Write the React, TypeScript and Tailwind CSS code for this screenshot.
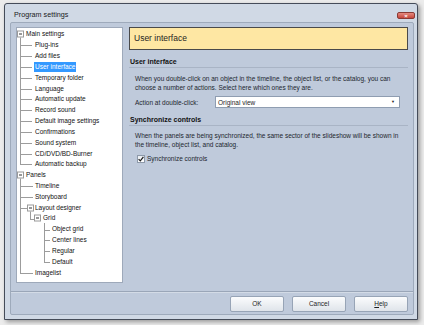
import React from 'react';

type Node = { label: string; level: number; expandable?: boolean; selected?: boolean };

const ROW_H = 10.84;

const TREE: Node[] = [
  { label: 'Main settings', level: 0, expandable: true },
  { label: 'Plug-ins', level: 1 },
  { label: 'Add files', level: 1 },
  { label: 'User interface', level: 1, selected: true },
  { label: 'Temporary folder', level: 1 },
  { label: 'Language', level: 1 },
  { label: 'Automatic update', level: 1 },
  { label: 'Record sound', level: 1 },
  { label: 'Default image settings', level: 1 },
  { label: 'Confirmations', level: 1 },
  { label: 'Sound system', level: 1 },
  { label: 'CD/DVD/BD-Burner', level: 1 },
  { label: 'Automatic backup', level: 1 },
  { label: 'Panels', level: 0, expandable: true },
  { label: 'Timeline', level: 1 },
  { label: 'Storyboard', level: 1 },
  { label: 'Layout designer', level: 1, expandable: true },
  { label: 'Grid', level: 2, expandable: true },
  { label: 'Object grid', level: 3 },
  { label: 'Center lines', level: 3 },
  { label: 'Regular', level: 3 },
  { label: 'Default', level: 3 },
  { label: 'Imagelist', level: 1 },
];

// text start (relative to tree inner edge) per level
const TEXT_X = [9, 18, 26, 35];
const BOX_X = [0, 10, 17];

const cy = (i: number) => i * ROW_H + ROW_H / 2;
const hy = (i: number) => Math.round(cy(i)) + 0.5;

function TreeLines() {
  const c = '#9c9c9c';
  return (
    <svg className="absolute left-0 top-0" width="105" height="254" shapeRendering="crispEdges">
      {/* main settings children */}
      <line x1="3.5" y1={cy(0) + 3} x2="3.5" y2={hy(12)} stroke={c} />
      {[1, 2, 3, 4, 5, 6, 7, 8, 9, 10, 11, 12].map((i) => (
        <line key={i} x1="3.5" y1={hy(i)} x2="15" y2={hy(i)} stroke={c} />
      ))}
      {/* panels children */}
      <line x1="3.5" y1={cy(13) + 3} x2="3.5" y2={hy(22)} stroke={c} />
      {[14, 15, 22].map((i) => (
        <line key={i} x1="3.5" y1={hy(i)} x2="16" y2={hy(i)} stroke={c} />
      ))}
      <line x1="3.5" y1={hy(16)} x2="10" y2={hy(16)} stroke={c} />
      {/* layout designer -> grid */}
      <line x1="13.5" y1={cy(16) + 3} x2="13.5" y2={hy(17)} stroke={c} />
      <line x1="13.5" y1={hy(17)} x2="17" y2={hy(17)} stroke={c} />
      {/* grid children */}
      <line x1="27.5" y1={cy(17) + 4} x2="27.5" y2={hy(21)} stroke={c} />
      {[18, 19, 20, 21].map((i) => (
        <line key={i} x1="27.5" y1={hy(i)} x2="33" y2={hy(i)} stroke={c} />
      ))}
    </svg>
  );
}

function ExpandBox() {
  return (
    <span className="flex h-[7px] w-[7px] items-center justify-center border border-[#9a9a9a] bg-white">
      <span className="h-px w-[3px] bg-[#333]" />
    </span>
  );
}

function Tree() {
  return (
    <div className="relative h-[256px] w-[107px] border border-[#9ea9ba] bg-white">
      <div className="relative mt-[1px]">
        <TreeLines />
        {TREE.map((n) => (
          <div key={n.label} className="relative flex h-[10.84px] items-center">
            {n.expandable && (
              <span className="absolute top-1/2 -translate-y-1/2" style={{ left: BOX_X[n.level] }}>
                <ExpandBox />
              </span>
            )}
            <span
              className={`absolute whitespace-nowrap px-[1px] leading-[10px] ${
                n.selected ? 'bg-[#3399ff] text-white' : 'text-[#111]'
              }`}
              style={{ left: TEXT_X[n.level] - 1 }}
            >
              {n.label}
            </span>
          </div>
        ))}
      </div>
    </div>
  );
}

function SectionTitle({ children }: { children: React.ReactNode }) {
  return (
    <div className="border-b border-[#a9b4c5] pb-[1px] pl-[1px] text-[7px] font-bold leading-[9px] text-[#111]">
      {children}
    </div>
  );
}

function Button({ children }: { children: React.ReactNode }) {
  return (
    <button className="h-[16px] w-[54px] rounded-[2px] border border-[#97a4b6] bg-gradient-to-b from-[#fbfcfd] to-[#dfe4ea] text-[6.5px] text-[#1e1e1e]">
      {children}
    </button>
  );
}

export default function App() {
  return (
    <div className="h-[325px] w-[424px] overflow-hidden bg-[#ececec] pl-[4px] pt-[3px] font-['Liberation_Sans',Arial,sans-serif] text-[6.5px]">
      <div className="flex h-[317px] w-[414px] flex-col rounded-t-[3px] border border-[#454c59] bg-[#d0d9e5] shadow-[2px_2px_4px_rgba(0,0,0,0.35)]">
        {/* title bar */}
        <div className="relative flex h-[18px] items-center pl-[9px] pt-[5px]">
          <span className="text-[7.2px] text-[#1b1b1b]">Program settings</span>
          <span className="absolute right-[2px] top-[8px] flex h-[7px] w-[18px] items-center justify-center rounded-[2px] border border-[#8a3a34] bg-gradient-to-b from-[#e58a80] to-[#c5443a] text-[6px] font-bold leading-none text-white">
            ×
          </span>
        </div>

        {/* client */}
        <div className="mb-[4px] ml-[5px] mr-[3px] flex flex-1 flex-col rounded-[2px] border border-[#9eaabb] bg-[#bfcadb]">
          <div className="flex flex-1 pl-[5px] pt-[4px]">
            <Tree />
            <div className="ml-[6px] w-[279px]">
              <div className="h-[23px] border border-[#4a4a4a] bg-[#fee7a3] pl-[4px] pt-[4.5px] text-[8.5px] leading-[11px] text-[#1e1e1e]">
                User interface
              </div>

              <div className="mt-[7px]">
                <SectionTitle>User interface</SectionTitle>
                <div className="pl-[6px] pt-[7px] leading-[8.7px] text-[#22262e]">
                  When you double-click on an object in the timeline, the object list, or the catalog, you can
                  <br />
                  choose a number of actions. Select here which ones they are.
                </div>
                <div className="mt-[4px] flex items-center pl-[6px]">
                  <span className="w-[80px] text-[#22262e]">Action at double-click:</span>
                  <div className="flex h-[12px] w-[185px] items-center justify-between border border-[#8f9db1] bg-white pl-[2px] pr-[4px]">
                    <span className="text-[#1e1e1e]">Original view</span>
                    <span className="text-[4px] text-[#222]">▼</span>
                  </div>
                </div>
              </div>

              <div className="mt-[7px]">
                <SectionTitle>Synchronize controls</SectionTitle>
                <div className="pl-[6px] pt-[5px] leading-[9px] text-[#22262e]">
                  When the panels are being synchronized, the same sector of the slideshow will be shown in
                  <br />
                  the timeline, object list, and catalog.
                </div>
                <div className="mt-[5px] flex items-center pl-[8px]">
                  <span className="flex h-[8px] w-[8px] items-center justify-center border border-[#8d99a9] bg-gradient-to-b from-[#e9edf2] to-[#ffffff]">
                    <svg width="6" height="6" viewBox="0 0 6 6">
                      <path d="M0.6 3.1 L2.3 4.9 L5.4 0.8" fill="none" stroke="#1a1a1a" strokeWidth="1.2" />
                    </svg>
                  </span>
                  <span className="ml-[2px] text-[#22262e]">Synchronize controls</span>
                </div>
              </div>
            </div>
          </div>

          <div className="flex h-[23px] shrink-0 items-start justify-end gap-[8px] border-t border-[#9aa6b8] pr-[5px] pt-[4px] shadow-[inset_0_1px_0_#d3dbe6]">
            <Button>OK</Button>
            <Button>Cancel</Button>
            <Button>
              <span className="underline">H</span>elp
            </Button>
          </div>
        </div>
      </div>
    </div>
  );
}
